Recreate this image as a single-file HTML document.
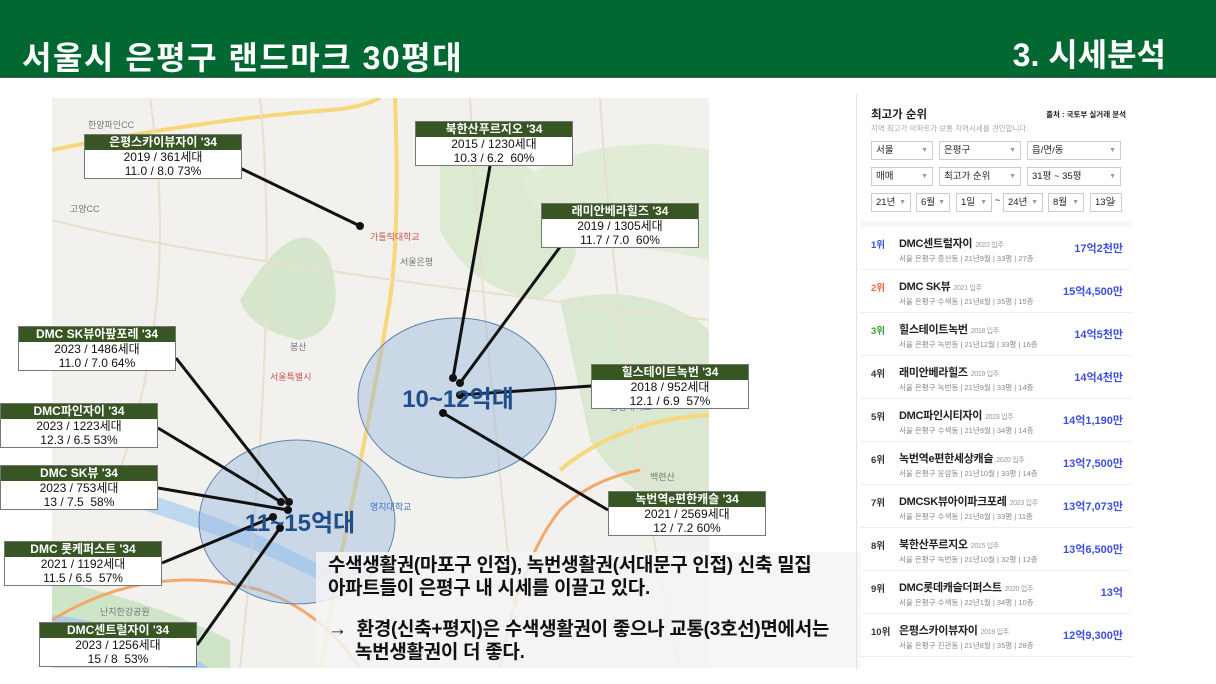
<!DOCTYPE html>
<html><head><meta charset="utf-8"><style>
*{margin:0;padding:0;box-sizing:border-box}
body{width:1216px;height:684px;position:relative;overflow:hidden;background:#fff;font-family:"Liberation Sans","Noto Sans CJK KR",sans-serif}
.hdr{position:absolute;left:0;top:0;width:1216px;height:78px;background:#006830;border-bottom:1px solid #555}
.hdr .t{position:absolute;left:22px;top:33px;color:#fff;font-size:32px;font-weight:bold;letter-spacing:1.5px}
.hdr .r{position:absolute;right:50px;top:30px;color:#fff;font-size:32px;font-weight:bold}
.map{position:absolute;left:52px;top:98px;width:657px;height:570px;overflow:hidden;background:#f3f2ee}
.lb{position:absolute;width:158px;border:1px solid #777;background:#fff;text-align:center;font-size:12px;line-height:14px;color:#111}
.lb b{display:block;background:#375623;color:#fff;font-size:12px;line-height:15px;font-weight:bold}
.ov{position:absolute;left:316px;top:552px;width:544px;height:116px;background:rgba(245,245,245,.85);font-size:19px;font-weight:bold;color:#111;line-height:23px;padding:0 0 0 12px;letter-spacing:-0.3px}
.rp{position:absolute;left:856px;top:94px;width:280px;height:576px;border-left:1px solid #e3e3e3}
.sel{position:absolute;height:19px;border:1px solid #ccc;font-size:9.5px;line-height:17px;padding-left:4px;color:#222}
.sel:after{content:"▼";position:absolute;right:4px;top:0;font-size:7px;color:#999}
.it{position:absolute;left:4px;width:270px;height:43px;border-bottom:1px solid #eee}
.it .n{position:absolute;left:10px;top:10px;font-size:9.5px;font-weight:bold;color:#333}
.it .a{position:absolute;left:38px;top:8px;font-size:11px;font-weight:bold;color:#222;letter-spacing:-0.3px}
.it .a i{font-style:normal;font-weight:normal;font-size:7px;color:#999;margin-left:3px}
.it .s{position:absolute;left:38px;top:26px;font-size:7.5px;color:#888}
.it .p{position:absolute;right:8px;top:13px;font-size:11px;font-weight:bold;color:#3d4fe0}
</style></head><body>
<div class="hdr"><div class="t">서울시 은평구 랜드마크 30평대</div><div class="r">3. 시세분석</div></div>
<div class="map">
<svg width="657" height="570" viewBox="52 98 657 570" style="position:absolute;left:0;top:0">
<rect x="52" y="98" width="657" height="570" fill="#f2f1ed"/>
<path d="M240 300 Q300 200 330 260 Q350 330 300 340 Q250 330 240 300Z" fill="#d5e6cc"/>
<path d="M440 150 Q520 140 560 200 Q600 260 540 300 Q470 290 440 230Z" fill="#dcead2"/>
<path d="M560 300 Q650 280 709 330 L709 500 Q640 520 590 440Z" fill="#dbe8d1"/>
<path d="M520 180 Q600 130 709 150 L709 260 Q620 240 560 250Z" fill="#e0ecd6"/>
<path d="M52 580 Q150 600 230 640 L230 668 L52 668Z" fill="#cfe5c8"/>
<path d="M52 615 Q140 625 210 668 L170 668 Q120 640 52 640Z" fill="#a9cdea"/>
<path d="M52 470 Q200 500 330 570 L330 585 Q200 520 52 485Z" fill="#bcd8ee"/>
<g fill="none" stroke="#f7d77a" stroke-width="4">
<path d="M395 98 Q400 230 390 300 Q370 420 340 560 Q330 620 320 668"/>
<path d="M52 150 Q200 120 330 110 Q360 108 380 98"/>
<path d="M560 470 Q620 420 709 415"/>
</g>
<g fill="none" stroke="#f3a86a" stroke-width="3">
<path d="M52 620 Q150 560 260 590 Q320 610 360 668"/>
<path d="M500 668 Q520 560 560 510 Q590 480 640 470"/>
</g>
<g fill="none" stroke="#e8e0cc" stroke-width="2">
<path d="M52 220 Q200 260 709 320"/><path d="M150 98 Q180 300 120 470"/><path d="M260 98 Q280 300 240 668"/>
<path d="M470 98 Q480 300 520 668"/><path d="M600 98 Q620 400 680 668"/>
</g>
<ellipse cx="457" cy="398" rx="99" ry="80" fill="rgba(150,185,225,.45)" stroke="#5f84b0" stroke-width="1"/>
<ellipse cx="297" cy="522" rx="98" ry="82" fill="rgba(150,185,225,.45)" stroke="#5f84b0" stroke-width="1"/>
<g stroke="#111" stroke-width="3">
<line x1="240" y1="168" x2="360" y2="226"/>
<line x1="490" y1="166" x2="453" y2="378"/>
<line x1="560" y1="247" x2="460" y2="383"/>
<line x1="591" y1="386" x2="460" y2="395"/>
<line x1="608" y1="510" x2="443" y2="413"/>
<line x1="176" y1="358" x2="289" y2="502"/>
<line x1="158" y1="428" x2="281" y2="502"/>
<line x1="158" y1="488" x2="288" y2="510"/>
<line x1="162" y1="563" x2="273" y2="517"/>
<line x1="197" y1="645" x2="280" y2="528"/>
</g>
<g fill="#111"><circle cx="360" cy="226" r="4"/><circle cx="453" cy="378" r="4"/><circle cx="460" cy="383" r="4"/><circle cx="460" cy="395" r="4"/><circle cx="443" cy="413" r="4"/><circle cx="281" cy="502" r="4"/><circle cx="289" cy="502" r="4"/><circle cx="288" cy="510" r="4"/><circle cx="273" cy="517" r="4"/><circle cx="280" cy="528" r="4"/></g>
<text x="458" y="407" font-size="24" font-weight="bold" fill="#1f4e8c" text-anchor="middle" font-family="Liberation Sans,Noto Sans CJK KR,sans-serif">10~12억대</text>
<text x="300" y="531" font-size="24" font-weight="bold" fill="#1f4e8c" text-anchor="middle" font-family="Liberation Sans,Noto Sans CJK KR,sans-serif">11~15억대</text>
<g font-size="9" fill="#777" font-family="Liberation Sans,Noto Sans CJK KR,sans-serif">
<text x="88" y="128">한양파인CC</text><text x="70" y="212">고양CC</text><text x="370" y="240" fill="#c55">가톨릭대학교</text><text x="400" y="265">서울은평</text><text x="290" y="350">봉산</text><text x="270" y="380" fill="#c55">서울특별시</text><text x="610" y="410" fill="#3a7bc0">상명대학교</text><text x="370" y="510" fill="#3a7bc0">명지대학교</text><text x="100" y="615">난지한강공원</text><text x="650" y="480">백련산</text>
</g>
</svg>
</div>
<div class="lb" style="left:84px;top:134px"><b>은평스카이뷰자이 '34</b>2019 / 361세대<br>11.0 / 8.0 73%</div>
<div class="lb" style="left:415px;top:121px"><b>북한산푸르지오 '34</b>2015 / 1230세대<br>10.3 / 6.2&nbsp; 60%</div>
<div class="lb" style="left:541px;top:203px"><b>래미안베라힐즈 '34</b>2019 / 1305세대<br>11.7 / 7.0&nbsp; 60%</div>
<div class="lb" style="left:18px;top:326px"><b>DMC SK뷰아팦포레 '34</b>2023 / 1486세대<br>11.0 / 7.0 64%</div>
<div class="lb" style="left:0px;top:403px"><b>DMC파인자이 '34</b>2023 / 1223세대<br>12.3 / 6.5 53%</div>
<div class="lb" style="left:0px;top:465px"><b>DMC SK뷰 '34</b>2023 / 753세대<br>13 / 7.5&nbsp; 58%</div>
<div class="lb" style="left:4px;top:541px"><b>DMC 롯케퍼스트 '34</b>2021 / 1192세대<br>11.5 / 6.5&nbsp; 57%</div>
<div class="lb" style="left:39px;top:622px"><b>DMC센트럴자이 '34</b>2023 / 1256세대<br>15 / 8&nbsp; 53%</div>
<div class="lb" style="left:591px;top:364px"><b>힐스테이트녹번 '34</b>2018 / 952세대<br>12.1 / 6.9&nbsp; 57%</div>
<div class="lb" style="left:608px;top:491px"><b>녹번역e편한캐슬 '34</b>2021 / 2569세대<br>12 / 7.2 60%</div>
<div class="ov"><div style="padding-top:2px">수색생활권(마포구 인접), 녹번생활권(서대문구 인접) 신축 밀집<br>아파트들이 은평구 내 시세를 이끌고 있다.</div><div style="margin-top:18px">→&nbsp; 환경(신축+평지)은 수색생활권이 좋으나 교통(3호선)면에서는<br><span style="padding-left:27px">녹번생활권이 더 좋다.</span></div></div>
<div class="rp">
<div style="position:absolute;left:14px;top:12px;font-size:11.5px;font-weight:bold;color:#222">최고가 순위</div>
<div style="position:absolute;right:10px;top:15px;font-size:7.5px;font-weight:bold;color:#222">출처 : 국토부 실거래 분석</div>
<div style="position:absolute;left:14px;top:29px;font-size:7.5px;color:#aaa">지역 최고가 아파트가 보통 지역시세를 견인합니다.</div>
<div class="sel" style="left:14px;top:47px;width:62px">서울</div>
<div class="sel" style="left:82px;top:47px;width:82px">은평구</div>
<div class="sel" style="left:170px;top:47px;width:94px">읍/면/동</div>
<div class="sel" style="left:14px;top:73px;width:62px">매매</div>
<div class="sel" style="left:82px;top:73px;width:82px">최고가 순위</div>
<div class="sel" style="left:170px;top:73px;width:94px">31평 ~ 35평</div>
<div class="sel" style="left:14px;top:99px;width:40px">21년</div>
<div class="sel" style="left:59px;top:99px;width:34px">6월</div>
<div class="sel" style="left:99px;top:99px;width:36px">1일</div>
<div style="position:absolute;left:138px;top:101px;font-size:9px">~</div>
<div class="sel" style="left:146px;top:99px;width:40px">24년</div>
<div class="sel" style="left:191px;top:99px;width:36px">8월</div>
<div class="sel" style="left:233px;top:99px;width:32px">13일</div>
<div style="position:absolute;left:4px;top:127px;width:270px;height:6px;background:#f6f6f6"></div>
<div class="it" style="top:133px"><span class="n" style="color:#3d4fe0">1위</span><span class="a">DMC센트럴자이<i>2022 입주</i></span><span class="s">서울 은평구 증산동 | 21년9월 | 33평 | 27층</span><span class="p">17억2천만</span></div>
<div class="it" style="top:176px"><span class="n" style="color:#e8673c">2위</span><span class="a">DMC SK뷰<i>2021 입주</i></span><span class="s">서울 은평구 수색동 | 21년8월 | 35평 | 15층</span><span class="p">15억4,500만</span></div>
<div class="it" style="top:219px"><span class="n" style="color:#3a9a3a">3위</span><span class="a">힐스테이트녹번<i>2018 입주</i></span><span class="s">서울 은평구 녹번동 | 21년12월 | 33평 | 16층</span><span class="p">14억5천만</span></div>
<div class="it" style="top:262px"><span class="n">4위</span><span class="a">래미안베라힐즈<i>2019 입주</i></span><span class="s">서울 은평구 녹번동 | 21년9월 | 33평 | 14층</span><span class="p">14억4천만</span></div>
<div class="it" style="top:305px"><span class="n">5위</span><span class="a">DMC파인시티자이<i>2023 입주</i></span><span class="s">서울 은평구 수색동 | 21년9월 | 34평 | 14층</span><span class="p">14억1,190만</span></div>
<div class="it" style="top:348px"><span class="n">6위</span><span class="a">녹번역e편한세상캐슬<i>2020 입주</i></span><span class="s">서울 은평구 응암동 | 21년10월 | 33평 | 14층</span><span class="p">13억7,500만</span></div>
<div class="it" style="top:391px"><span class="n">7위</span><span class="a">DMCSK뷰아이파크포레<i>2023 입주</i></span><span class="s">서울 은평구 수색동 | 21년8월 | 33평 | 11층</span><span class="p">13억7,073만</span></div>
<div class="it" style="top:434px"><span class="n">8위</span><span class="a">북한산푸르지오<i>2015 입주</i></span><span class="s">서울 은평구 녹번동 | 21년10월 | 32평 | 12층</span><span class="p">13억6,500만</span></div>
<div class="it" style="top:477px"><span class="n">9위</span><span class="a">DMC롯데캐슬더퍼스트<i>2020 입주</i></span><span class="s">서울 은평구 수색동 | 22년1월 | 34평 | 10층</span><span class="p">13억</span></div>
<div class="it" style="top:520px"><span class="n">10위</span><span class="a">은평스카이뷰자이<i>2019 입주</i></span><span class="s">서울 은평구 진관동 | 21년8월 | 35평 | 28층</span><span class="p">12억9,300만</span></div>
</div>
</body></html>
